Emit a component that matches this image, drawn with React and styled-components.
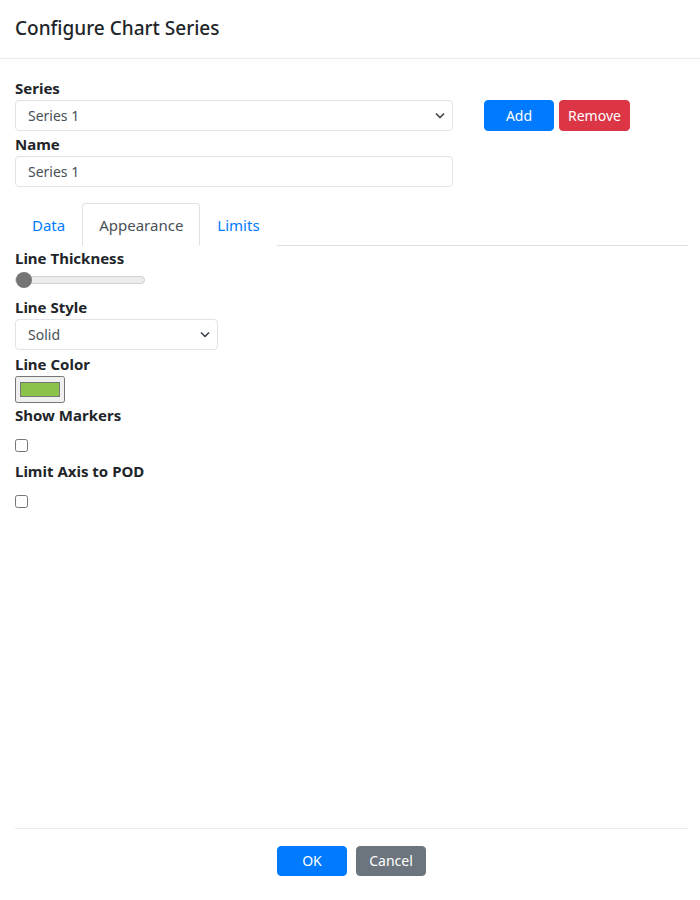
import { useState } from 'react'
import styled, { createGlobalStyle } from 'styled-components'

const colors = {
  text: '#212529',
  muted: '#495057',
  border: '#ced4da',
  divider: '#e9ecef',
  primary: '#007bff',
  danger: '#dc3545',
  secondary: '#6c757d',
}

const GlobalStyle = createGlobalStyle`
  html, body {
    margin: 0;
    padding: 0;
    background: #fff;
  }
  body {
    font-family: "Noto Sans", "Open Sans", sans-serif;
    color: ${colors.text};
  }
  * {
    box-sizing: border-box;
  }
`

const Modal = styled.div`
  display: flex;
  flex-direction: column;
  height: 900px;
`

const Header = styled.div`
  padding: 13px 15px 15px;
  border-bottom: 1px solid ${colors.divider};
`

const Title = styled.h5`
  margin: 0;
  font-size: 19px;
  font-weight: 500;
  line-height: 30px;
`

const Body = styled.div`
  flex: 1;
  padding: 17px 12px 0 15px;
`

const Label = styled.div`
  font-size: 15px;
  font-weight: 700;
  line-height: 24px;
`

const SeriesRow = styled.div`
  display: flex;
  align-items: flex-start;
`

const Field = styled.div`
  width: ${(p) => p.width}px;
  margin-top: ${(p) => p.gap || 0}px;
`

const Actions = styled.div`
  display: flex;
  gap: 5px;
  margin-left: 31px;
  padding-top: 24px;
`

const Button = styled.button`
  min-width: 70px;
  height: ${(p) => p.height || 31}px;
  padding: 0 8px;
  border: 1px solid ${(p) => p.color};
  border-radius: 4px;
  background: ${(p) => p.color};
  color: #fff;
  font-family: inherit;
  font-size: 14px;
  line-height: 1;
  cursor: pointer;
`

const controlBase = `
  display: block;
  width: 100%;
  height: 31px;
  padding: 0 12px;
  border: 1px solid #dfe3e8;
  border-radius: 4px;
  background: #fff;
  color: ${colors.muted};
  font-family: inherit;
  font-size: 14px;
  outline: none;
`

const SelectWrap = styled.div`
  position: relative;
  width: ${(p) => (p.width ? `${p.width}px` : '100%')};
  margin-bottom: ${(p) => p.after || 0}px;
`

const Select = styled.select`
  ${controlBase}
  appearance: none;
  padding-right: 28px;
`

const Chevron = styled.svg`
  position: absolute;
  right: 8px;
  top: 12px;
  pointer-events: none;
`

const Input = styled.input`
  ${controlBase}
`

const TabNav = styled.div`
  display: flex;
  margin-top: 16px;
  border-bottom: 1px solid #dee2e6;
`

const Tab = styled.button`
  margin-bottom: -1px;
  padding: 9px 16px 8px;
  border: 1px solid ${(p) => (p.active ? '#dee2e6' : 'transparent')};
  border-bottom-color: ${(p) => (p.active ? '#fff' : 'transparent')};
  border-radius: 4px 4px 0 0;
  background: #fff;
  color: ${(p) => (p.active ? colors.muted : colors.primary)};
  font-family: inherit;
  font-size: 15px;
  line-height: 24px;
  cursor: pointer;
`

const SliderBlock = styled.div`
  height: 25px;
  padding-top: 2px;
`

const Range = styled.input`
  display: block;
  width: 130px;
  height: 16px;
  margin: 0;
  appearance: none;
  background: transparent;

  &::-webkit-slider-runnable-track {
    height: 8px;
    border: 1px solid #d3d3d3;
    border-radius: 4px;
    background: #ececec;
  }
  &::-webkit-slider-thumb {
    appearance: none;
    width: 16px;
    height: 16px;
    margin-top: -5px;
    border-radius: 50%;
    background: #757575;
  }
`

const ColorInput = styled.input`
  display: block;
  width: 50px;
  height: 27px;
  margin: 0;
`

const CheckRow = styled.div`
  height: 32px;
  padding-top: 12px;
`

const Check = styled.input`
  display: block;
  width: 13px;
  height: 13px;
  margin: 0;
`

const Footer = styled.div`
  display: flex;
  justify-content: center;
  gap: 9px;
  height: 72px;
  margin: 0 12px 0 15px;
  padding-top: 17px;
  border-top: 1px solid ${colors.divider};
`

const ChevronIcon = () => (
  <Chevron width="10" height="7" viewBox="0 0 10 7">
    <path d="M1 1.5 L5 5.5 L9 1.5" fill="none" stroke="#343a40" strokeWidth="1.5" />
  </Chevron>
)

export default function App() {
  const [tab, setTab] = useState('Appearance')

  return (
    <Modal>
      <GlobalStyle />
      <Header>
        <Title>Configure Chart Series</Title>
      </Header>
      <Body>
        <SeriesRow>
          <Field width={438}>
            <Label>Series</Label>
            <SelectWrap>
              <Select defaultValue="1">
                <option value="1">Series 1</option>
              </Select>
              <ChevronIcon />
            </SelectWrap>
          </Field>
          <Actions>
            <Button color={colors.primary}>Add</Button>
            <Button color={colors.danger}>Remove</Button>
          </Actions>
        </SeriesRow>
        <Field width={438} gap={1}>
          <Label>Name</Label>
          <Input defaultValue="Series 1" />
        </Field>

        <TabNav>
          {['Data', 'Appearance', 'Limits'].map((t) => (
            <Tab key={t} active={tab === t} onClick={() => setTab(t)}>
              {t}
            </Tab>
          ))}
        </TabNav>

        <Label>Line Thickness</Label>
        <SliderBlock>
          <Range type="range" min="1" max="10" defaultValue="1" />
        </SliderBlock>
        <Label>Line Style</Label>
        <SelectWrap width={203} after={2}>
          <Select defaultValue="solid">
            <option value="solid">Solid</option>
            <option value="dashed">Dashed</option>
          </Select>
          <ChevronIcon />
        </SelectWrap>
        <Label>Line Color</Label>
        <ColorInput type="color" defaultValue="#8bc34a" />
        <Label>Show Markers</Label>
        <CheckRow>
          <Check type="checkbox" />
        </CheckRow>
        <Label>Limit Axis to POD</Label>
        <CheckRow>
          <Check type="checkbox" />
        </CheckRow>
      </Body>
      <Footer>
        <Button color={colors.primary} height={30}>OK</Button>
        <Button color={colors.secondary} height={30}>Cancel</Button>
      </Footer>
    </Modal>
  )
}
